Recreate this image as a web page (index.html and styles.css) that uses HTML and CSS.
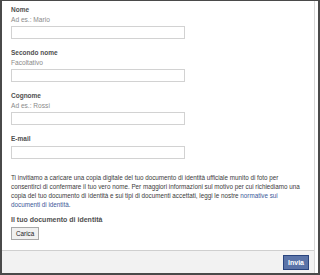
FILE: index.html
```html
<!DOCTYPE html>
<html lang="it">
<head>
<meta charset="utf-8">
<title>Conferma identità</title>
<link rel="stylesheet" href="styles.css">
</head>
<body>
<div class="frame">
  <div class="panel">
    <div class="content">
      <div class="field">
        <div class="label">Nome</div>
        <div class="hint">Ad es.: Mario</div>
        <div class="input"></div>
      </div>
      <div class="field">
        <div class="label">Secondo nome</div>
        <div class="hint">Facoltativo</div>
        <div class="input"></div>
      </div>
      <div class="field">
        <div class="label">Cognome</div>
        <div class="hint">Ad es.: Rossi</div>
        <div class="input"></div>
      </div>
      <div class="field">
        <div class="label">E-mail</div>
        <div class="input"></div>
      </div>
      <p class="info">Ti invitiamo a caricare una copia digitale del tuo documento di identità ufficiale munito di foto per consentirci di confermare il tuo vero nome. Per maggiori informazioni sul motivo per cui richiediamo una copia del tuo documento di identità e sui tipi di documenti accettati, leggi le nostre <a class="link" href="#">normative sui documenti di identità</a>.</p>
      <div class="label doc">Il tuo documento di identità</div>
      <button class="upload" type="button">Carica</button>
    </div>
    <div class="footer">
      <button class="submit" type="button">Invia</button>
    </div>
  </div>
</div>
</body>
</html>
```
FILE: styles.css
```css
html, body {
  margin: 0;
  padding: 0;
  background: #fff;
}
.frame {
  width: 320px;
  height: 275px;
  box-sizing: border-box;
  border-top: 1px solid #4a4a4a;
  border-left: 2px solid #4a4a4a;
  border-right: 2px solid #4a4a4a;
  border-bottom: 2px solid #4a4a4a;
  background: #fff;
  display: flex;
}
.panel {
  flex: 1;
  margin-right: 3px;
  border-right: 1px solid #d8d8d8;
  display: flex;
  flex-direction: column;
}
.content {
  flex: 1;
  padding: 4px 9px 0 9px;
  font-family: "Liberation Sans", Arial, sans-serif;
  color: #333;
}
.field {
  margin-bottom: 9px;
}
.label {
  font-weight: bold;
  font-size: 6.5px;
  line-height: 10px;
  color: #4f4f4f;
}
.hint {
  font-size: 6.6px;
  line-height: 9px;
  color: #8a8a8a;
}
.input {
  margin-top: 2px;
  width: 174px;
  height: 13px;
  box-sizing: border-box;
  border: 1px solid #d2d2d2;
  background: #fff;
}
.info {
  margin: 14px 0 0 0;
  font-size: 6.3px;
  line-height: 9px;
  color: #3a3a3a;
}
.link {
  color: #3b5998;
  text-decoration: none;
}
.doc {
  margin-top: 6px;
  font-size: 7px;
}
.upload {
  display: block;
  margin-top: 2px;
  padding: 0 4px;
  height: 13px;
  font-family: "Liberation Sans", Arial, sans-serif;
  font-size: 6.3px;
  font-weight: normal;
  color: #222;
  background: #f0f0f0;
  border: 1px solid #a8a8a8;
}
.footer {
  height: 23px;
  box-sizing: border-box;
  border-top: 1px solid #cfcfcf;
  background: #f2f2f2;
  display: flex;
  align-items: center;
  justify-content: flex-end;
  padding-right: 5px;
}
.submit {
  height: 15px;
  padding: 0 4px;
  font-family: "Liberation Sans", Arial, sans-serif;
  font-size: 7px;
  font-weight: bold;
  color: #fff;
  background: #5b74a8;
  border: 1px solid #29447e;
}
```
